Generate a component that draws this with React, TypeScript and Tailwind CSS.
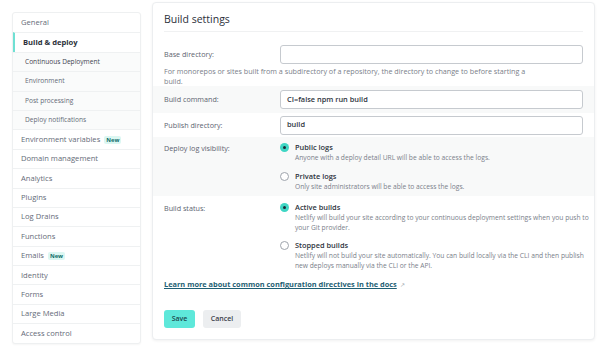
import React from "react";

const font = { fontFamily: '"Open Sans", "Noto Sans", sans-serif' };

const navItems: { label: string; badge?: boolean; active?: boolean; sub?: boolean }[] = [
  { label: "General" },
  { label: "Build & deploy", active: true },
  { label: "Continuous Deployment", sub: true },
  { label: "Environment", sub: true },
  { label: "Post processing", sub: true },
  { label: "Deploy notifications", sub: true },
  { label: "Environment variables", badge: true },
  { label: "Domain management" },
  { label: "Analytics" },
  { label: "Plugins" },
  { label: "Log Drains" },
  { label: "Functions" },
  { label: "Emails", badge: true },
  { label: "Identity" },
  { label: "Forms" },
  { label: "Large Media" },
  { label: "Access control" },
];

function Sidebar() {
  return (
    <nav className="w-[129px] shrink-0 self-start rounded-[3px] border border-[#eef0f1] bg-white shadow-[0_1px_2px_rgba(0,0,0,0.04)]">
      {navItems.map((item, i) => (
        <div
          key={item.label}
          className={
            "flex h-[19.4px] items-center gap-1 border-[#eff1f2] " +
            (i > 0 ? "border-t " : "") +
            (item.sub ? "bg-[#fafbfb] pl-[12px] text-[6.6px] " : "pl-[8px] text-[7.6px] ") +
            (item.active
              ? "border-l-2 border-l-[#6fe0d3] pl-[7px] font-bold text-[#2b303a] "
              : item.sub && i === 2
              ? "text-[#3e4450] "
              : "text-[#656b78] ")
          }
        >
          <span>{item.label}</span>
          {item.badge && (
            <span className="rounded-[2px] bg-[#dcf7f2] px-[2px] text-[5.8px] font-bold leading-[8px] text-[#0f6e6a]">
              New
            </span>
          )}
        </div>
      ))}
    </nav>
  );
}

function Radio({ checked }: { checked?: boolean }) {
  return checked ? (
    <span className="mt-[1px] flex h-[9px] w-[9px] shrink-0 items-center justify-center rounded-full bg-[#3fd6c4]">
      <span className="h-[3px] w-[3px] rounded-full bg-[#1d2a36]" />
    </span>
  ) : (
    <span className="mt-[1px] h-[9px] w-[9px] shrink-0 rounded-full border border-[#9ea4ac] bg-white" />
  );
}

function Option({ checked, title, desc }: { checked?: boolean; title: string; desc: React.ReactNode }) {
  return (
    <div className="flex gap-[6px]">
      <Radio checked={checked} />
      <div>
        <div className="text-[7.4px] leading-[11px] font-semibold text-[#2e3440]">{title}</div>
        <div className="whitespace-nowrap text-[6.7px] leading-[10px] text-[#7a808a]">{desc}</div>
      </div>
    </div>
  );
}

function Input({ value }: { value?: string }) {
  return (
    <div className="flex h-[19px] w-[303px] items-center rounded-[3px] border border-[#c6cacf] bg-white px-[6px] text-[7.4px] font-semibold text-[#2e3440]">
      {value}
    </div>
  );
}

const label = "w-[116px] shrink-0 text-[7.2px] text-[#5d6370]";

export default function App() {
  return (
    <div className="flex h-[348px] w-[602px] gap-[11px] bg-white pl-[12px] pt-[12px]" style={font}>
      <Sidebar />
      <main className="-mt-[10px] mb-[8px] w-[443px] rounded-[4px] border border-[#eceef0] bg-white shadow-[0_1px_3px_rgba(0,0,0,0.06)]">
        <div className="mx-[11px] border-b border-[#f0f1f2] pb-[5px] pt-[9px] text-[10.5px] leading-[14px] font-medium text-[#2b303a]">
          Build settings
        </div>
        <div className="pt-[13px]">
          <div className="px-[11px]">
            <div className="flex items-center">
              <span className={label}>Base directory:</span>
              <Input />
            </div>
            <p className="mt-[2px] w-[370px] text-[7.2px] leading-[10px] text-[#7a808a]">
              For monorepos or sites built from a subdirectory of a repository, the directory to change to before starting a build.
            </p>
          </div>
          <div className="flex h-[27px] items-center bg-[#f8f9f9] px-[11px]">
            <span className={label}>Build command:</span>
            <Input value="CI=false npm run build" />
          </div>
          <div className="flex h-[24px] items-center px-[11px]">
            <span className={label}>Publish directory:</span>
            <Input value="build" />
          </div>
          <div className="flex bg-[#f8f9f9] px-[11px] pb-[4px] pt-[4.5px]">
            <span className={label + " pt-[1px]"}>Deploy log visibility:</span>
            <div className="flex flex-col gap-[8.5px]">
              <Option checked title="Public logs" desc="Anyone with a deploy detail URL will be able to access the logs." />
              <Option title="Private logs" desc="Only site administrators will be able to access the logs." />
            </div>
          </div>
          <div className="flex px-[11px] pt-[5.5px]">
            <span className={label + " pt-[1px]"}>Build status:</span>
            <div className="flex flex-col gap-[7.5px]">
              <Option
                checked
                title="Active builds"
                desc={
                  <>
                    Netlify will build your site according to your continuous deployment settings when you push to
                    <br />
                    your Git provider.
                  </>
                }
              />
              <Option
                title="Stopped builds"
                desc={
                  <>
                    Netlify will not build your site automatically. You can build locally via the CLI and then publish
                    <br />
                    new deploys manually via the CLI or the API.
                  </>
                }
              />
            </div>
          </div>
          <div className="mt-[9px] flex h-[10px] items-center gap-[3px] px-[11px]">
            <span className="text-[7.4px] font-bold text-[#1f5f74] underline">
              Learn more about common configuration directives in the docs
            </span>
            <span className="text-[6px] text-[#9aa0a8]">↗</span>
          </div>
          <div className="mt-[20px] flex gap-[8px] px-[11px]">
            <button className="h-[18px] w-[31px] rounded-[3px] bg-[#5ee8da] text-[7px] font-semibold text-[#1c4a4f]">
              Save
            </button>
            <button className="h-[18px] w-[38px] rounded-[3px] bg-[#eceef0] text-[7px] font-semibold text-[#3a404a]">
              Cancel
            </button>
          </div>
        </div>
      </main>
    </div>
  );
}
